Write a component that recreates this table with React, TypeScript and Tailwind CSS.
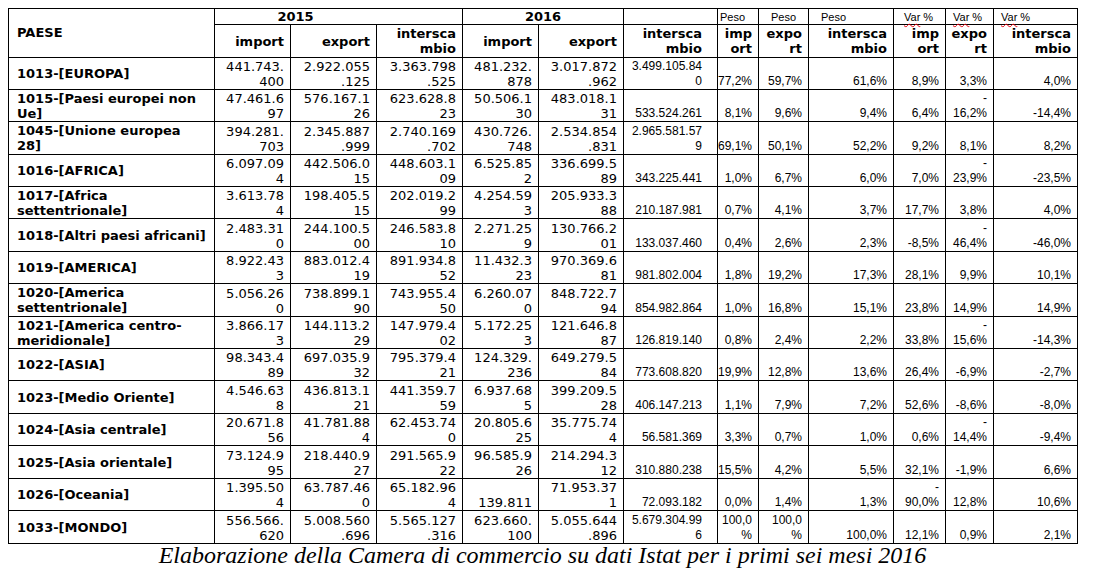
import React from 'react'

// paese, import15, export15, intersc15, import16, export16, intersc16, peso x3, var x3
const rows: string[][] = [
    ['1013-[EUROPA]', '441.743.\n400', '2.922.055\n.125', '3.363.798\n.525', '481.232.\n878', '3.017.872\n.962', '3.499.105.84\n0', '77,2%', '59,7%', '61,6%', '8,9%', '3,3%', '4,0%'],
    ['1015-[Paesi europei non\nUe]', '47.461.6\n97', '576.167.1\n26', '623.628.8\n23', '50.506.1\n30', '483.018.1\n31', '533.524.261', '8,1%', '9,6%', '9,4%', '6,4%', '-\n16,2%', '-14,4%'],
    ['1045-[Unione europea\n28]', '394.281.\n703', '2.345.887\n.999', '2.740.169\n.702', '430.726.\n748', '2.534.854\n.831', '2.965.581.57\n9', '69,1%', '50,1%', '52,2%', '9,2%', '8,1%', '8,2%'],
    ['1016-[AFRICA]', '6.097.09\n4', '442.506.0\n15', '448.603.1\n09', '6.525.85\n2', '336.699.5\n89', '343.225.441', '1,0%', '6,7%', '6,0%', '7,0%', '-\n23,9%', '-23,5%'],
    ['1017-[Africa\nsettentrionale]', '3.613.78\n4', '198.405.5\n15', '202.019.2\n99', '4.254.59\n3', '205.933.3\n88', '210.187.981', '0,7%', '4,1%', '3,7%', '17,7%', '3,8%', '4,0%'],
    ['1018-[Altri paesi africani]', '2.483.31\n0', '244.100.5\n00', '246.583.8\n10', '2.271.25\n9', '130.766.2\n01', '133.037.460', '0,4%', '2,6%', '2,3%', '-8,5%', '-\n46,4%', '-46,0%'],
    ['1019-[AMERICA]', '8.922.43\n3', '883.012.4\n19', '891.934.8\n52', '11.432.3\n23', '970.369.6\n81', '981.802.004', '1,8%', '19,2%', '17,3%', '28,1%', '9,9%', '10,1%'],
    ['1020-[America\nsettentrionale]', '5.056.26\n0', '738.899.1\n90', '743.955.4\n50', '6.260.07\n0', '848.722.7\n94', '854.982.864', '1,0%', '16,8%', '15,1%', '23,8%', '14,9%', '14,9%'],
    ['1021-[America centro-\nmeridionale]', '3.866.17\n3', '144.113.2\n29', '147.979.4\n02', '5.172.25\n3', '121.646.8\n87', '126.819.140', '0,8%', '2,4%', '2,2%', '33,8%', '-\n15,6%', '-14,3%'],
    ['1022-[ASIA]', '98.343.4\n89', '697.035.9\n32', '795.379.4\n21', '124.329.\n236', '649.279.5\n84', '773.608.820', '19,9%', '12,8%', '13,6%', '26,4%', '-6,9%', '-2,7%'],
    ['1023-[Medio Oriente]', '4.546.63\n8', '436.813.1\n21', '441.359.7\n59', '6.937.68\n5', '399.209.5\n28', '406.147.213', '1,1%', '7,9%', '7,2%', '52,6%', '-8,6%', '-8,0%'],
    ['1024-[Asia centrale]', '20.671.8\n56', '41.781.88\n4', '62.453.74\n0', '20.805.6\n25', '35.775.74\n4', '56.581.369', '3,3%', '0,7%', '1,0%', '0,6%', '-\n14,4%', '-9,4%'],
    ['1025-[Asia orientale]', '73.124.9\n95', '218.440.9\n27', '291.565.9\n22', '96.585.9\n26', '214.294.3\n12', '310.880.238', '15,5%', '4,2%', '5,5%', '32,1%', '-1,9%', '6,6%'],
    ['1026-[Oceania]', '1.395.50\n4', '63.787.46\n0', '65.182.96\n4', '139.811', '71.953.37\n1', '72.093.182', '0,0%', '1,4%', '1,3%', '-\n90,0%', '12,8%', '10,6%'],
    ['1033-[MONDO]', '556.566.\n620', '5.008.560\n.696', '5.565.127\n.316', '623.660.\n100', '5.055.644\n.896', '5.679.304.99\n6', '100,0\n%', '100,0\n%', '100,0%', '12,1%', '0,9%', '2,1%'],
]

const rowH = ['h-[32px]', 'h-[32px]', 'h-[33px]', 'h-[32px]', 'h-[32px]', 'h-[33px]', 'h-[32px]', 'h-[33px]', 'h-[32px]', 'h-[32px]', 'h-[33px]', 'h-[32px]', 'h-[33px]', 'h-[32px]', 'h-[33px]']

const widths = [206, 76, 86, 86, 76, 85, 94, 41, 50, 85, 52, 48, 84]

const cell = 'border border-black p-0'
const calibri = "font-['Liberation_Sans',sans-serif]"

const Label = ({ pl, text }: { pl: string; text: React.ReactNode }) => (
    <th className={`${cell} ${pl} ${calibri} text-left align-middle text-[11px] font-normal leading-[14px]`}>{text}</th>
)

const Var = () => (
    <>
        <span className="underline decoration-wavy decoration-red-600 decoration-[1px] underline-offset-[2px]">Var</span> %
    </>
)

const App = () => {
    return (
        <div className="bg-white w-[1095px] h-[576px] pt-2 pl-2 text-black font-['DejaVu_Sans',sans-serif]">
            <table className="table-fixed border-collapse w-[1069px]">
                <colgroup>
                    {widths.map((w, i) => (
                        <col key={i} style={{ width: w }} />
                    ))}
                </colgroup>
                <thead>
                    <tr className="h-[16px]">
                        <th rowSpan={2} className={`${cell} pl-2 text-left align-middle text-[13px] font-bold`}>PAESE</th>
                        <th colSpan={3} className={`${cell} pr-[86px] text-center align-middle text-[13px] font-bold leading-[14px]`}>2015</th>
                        <th colSpan={2} className={`${cell} text-center align-middle text-[13px] font-bold leading-[14px]`}>2016</th>
                        <th className={cell}></th>
                        <Label pl="pl-[2px]" text="Peso" />
                        <Label pl="pl-[12px]" text="Peso" />
                        <Label pl="pl-[12px]" text="Peso" />
                        <Label pl="pl-[10px]" text={<Var />} />
                        <Label pl="pl-[7px]" text={<Var />} />
                        <Label pl="pl-[7px]" text={<Var />} />
                    </tr>
                    <tr className="h-[33px]">
                        {['import', 'export', 'intersca\nmbio', 'import', 'export', 'intersca\nmbio', 'imp\nort', 'expo\nrt', 'intersca\nmbio', 'imp\nort', 'expo\nrt', 'intersca\nmbio'].map((h, i) => (
                            <th key={i} className={`${cell} ${i === 5 ? 'pr-[15px]' : 'pr-[6px]'} text-right align-middle text-[13px] font-bold leading-[15px] whitespace-pre-line`}>
                                {h}
                            </th>
                        ))}
                    </tr>
                </thead>
                <tbody>
                    {rows.map((r, ri) => (
                        <tr key={ri} className={rowH[ri]}>
                            <td className={`${cell} pl-2 text-left align-middle text-[13px] font-bold leading-[15px] whitespace-pre-line`}>{r[0]}</td>
                            {r.slice(1, 6).map((v, i) => (
                                <td key={i} className={`${cell} pr-[6px] text-right align-bottom text-[13px] leading-[15px] whitespace-pre-line`}>{v}</td>
                            ))}
                            <td className={`${cell} pr-[15px] text-right align-bottom ${calibri} text-[12px] leading-[15px] whitespace-pre-line`}>{r[6]}</td>
                            {r.slice(7).map((v, i) => (
                                <td key={i} className={`${cell} pr-[6px] text-right align-bottom ${calibri} text-[12px] leading-[15px] whitespace-pre-line`}>{v}</td>
                            ))}
                        </tr>
                    ))}
                </tbody>
            </table>
            <p className="-mt-px w-[1069px] text-center font-['Liberation_Serif',serif] italic text-[24px] leading-[24px]">
                Elaborazione della Camera di commercio su dati Istat per i primi sei mesi 2016
            </p>
        </div>
    )
}

export default App
